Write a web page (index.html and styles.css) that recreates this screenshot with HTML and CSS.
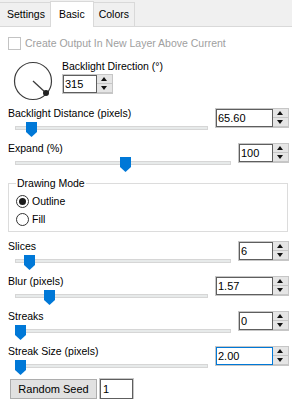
FILE: index.html
```html
<!DOCTYPE html>
<html lang="en">
<head>
 <meta charset="UTF-8">
 <title>Backlight</title>
 <link rel="stylesheet" href="styles.css">
</head>
<body>
 <div class="tabs">
 <div class="tab">Settings</div>
 <div class="tab active">Basic</div>
 <div class="tab">Colors</div>
 </div>

 <div class="panel">
 <div class="check-row disabled">
 <span class="checkbox"></span>
 <span>Create Output In New Layer Above Current</span>
 </div>

 <div class="dial-row">
 <svg class="dial" width="40" height="40" viewBox="0 0 40 40">
 <circle cx="20" cy="20" r="18.5" fill="none" stroke="#3c3c3c" stroke-width="1.2"/>
 <line x1="20" y1="20" x2="33" y2="32" stroke="#3c3c3c" stroke-width="1.3"/>
 <circle cx="33" cy="32" r="3" fill="#222"/>
 </svg>
 <div class="dial-col">
 <div class="label">Backlight Direction (°)</div>
 <div class="spin narrow">
 <span class="spin-val">315</span>
 <span class="spin-btns"><span class="up"></span><span class="down"></span></span>
 </div>
 </div>
 </div>

 <div class="srow">
 <div class="scol">
 <div class="label">Backlight Distance (pixels)</div>
 <div class="slider"><div class="track"></div><span class="thumb" style="left: 11px"></span></div>
 </div>
 <div class="spin wide">
 <span class="spin-val">65.60</span>
 <span class="spin-btns"><span class="up"></span><span class="down"></span></span>
 </div>
 </div>

 <div class="srow">
 <div class="scol">
 <div class="label">Expand (%)</div>
 <div class="slider"><div class="track"></div><span class="thumb" style="left: 105px"></span></div>
 </div>
 <div class="spin narrow">
 <span class="spin-val">100</span>
 <span class="spin-btns"><span class="up"></span><span class="down"></span></span>
 </div>
 </div>

 <fieldset class="group">
 <legend>Drawing Mode</legend>
 <div class="radio-row"><span class="radio checked"></span>Outline</div>
 <div class="radio-row"><span class="radio"></span>Fill</div>
 </fieldset>

 <div class="srow">
 <div class="scol">
 <div class="label">Slices</div>
 <div class="slider"><div class="track"></div><span class="thumb" style="left: 9px"></span></div>
 </div>
 <div class="spin narrow">
 <span class="spin-val">6</span>
 <span class="spin-btns"><span class="up"></span><span class="down"></span></span>
 </div>
 </div>

 <div class="srow">
 <div class="scol">
 <div class="label">Blur (pixels)</div>
 <div class="slider"><div class="track"></div><span class="thumb" style="left: 29px"></span></div>
 </div>
 <div class="spin wide">
 <span class="spin-val">1.57</span>
 <span class="spin-btns"><span class="up"></span><span class="down"></span></span>
 </div>
 </div>

 <div class="srow">
 <div class="scol">
 <div class="label">Streaks</div>
 <div class="slider"><div class="track"></div><span class="thumb" style="left: 0px"></span></div>
 </div>
 <div class="spin narrow">
 <span class="spin-val">0</span>
 <span class="spin-btns"><span class="up"></span><span class="down"></span></span>
 </div>
 </div>

 <div class="srow">
 <div class="scol">
 <div class="label">Streak Size (pixels)</div>
 <div class="slider"><div class="track"></div><span class="thumb" style="left: 0px"></span></div>
 </div>
 <div class="spin wide focus">
 <span class="spin-val">2.00</span>
 <span class="spin-btns"><span class="up"></span><span class="down"></span></span>
 </div>
 </div>

 <div class="seed-row">
 <div class="btn">Random Seed</div>
 <div class="seed-box">1</div>
 </div>
 </div>
</body>
</html>
```

FILE: styles.css
```css
* {
margin: 0;
padding: 0;
box-sizing: border-box;
}

body {
font-family: 'Liberation Sans', Arial, sans-serif;
font-size: 10.5px;
color: #000;
background: #fff;
width: 292px;
}

/* tab strip */
.tabs {
display: flex;
align-items: flex-end;
height: 27px;
background: #f0f0f0;
border-bottom: 1px solid #d9d9d9;
}

.tab {
height: 24px;
line-height: 22px;
padding: 0 5px;
background: #f0f0f0;
border: 1px solid #d9d9d9;
border-bottom: none;
margin-right: -1px;
}

.tab:first-child {
padding-left: 7px;
border-left: none;
}

.tab.active {
height: 26px;
line-height: 24px;
padding: 0 8px;
background: #fff;
margin-bottom: -1px;
position: relative;
z-index: 1;
}

.panel {
padding: 0 3px 0 8px;
}

.label {
height: 14px;
line-height: 14px;
white-space: nowrap;
}

/* checkbox */
.check-row {
display: flex;
align-items: center;
gap: 4px;
height: 13px;
margin-top: 10px;
line-height: 13px;
}

.check-row.disabled {
color: #a0a0a0;
}

.checkbox {
width: 13px;
height: 13px;
border: 1px solid #c3c3c3;
background: #fff;
}

/* direction dial */
.dial-row {
display: flex;
height: 46px;
margin-top: 10px;
}

.dial {
margin: 1px 0 0 5px;
}

.dial-col {
display: flex;
flex-direction: column;
align-items: flex-start;
margin-left: 9px;
}

.dial-col .label {
height: 13px;
line-height: 12px;
}

.dial-col .spin {
margin-top: 1px;
}

/* slider rows */
.srow {
display: flex;
align-items: flex-start;
height: 35px;
}

.scol {
flex: 1;
min-width: 0;
}

.slider {
position: relative;
height: 21px;
margin: 0 7px 0 7px;
}

.track {
position: absolute;
left: 0;
right: 0;
top: 6px;
height: 4px;
background: #e7eaea;
border: 1px solid #d6d6d6;
}

.thumb {
position: absolute;
top: 2px;
width: 11px;
height: 15px;
background: #0078d7;
clip-path: polygon(0 0, 100% 0, 100% 66%, 50% 100%, 0 66%);
}

/* numeric up-down */
.spin {
display: flex;
height: 20px;
margin-top: 2px;
border: 1px solid #c6c6c6;
border-right: none;
}

.spin.narrow .spin-val {
width: 34px;
}

.spin.wide .spin-val {
width: 57px;
}

.spin-val {
height: 100%;
border: 1px solid #5e5e5e;
background: #fff;
font-size: 11px;
line-height: 16px;
padding-left: 1px;
}

.spin.focus .spin-val {
border-color: #0078d7;
}

.spin-btns {
display: flex;
flex-direction: column;
width: 16px;
}

.spin-btns span {
flex: 1;
position: relative;
background: #e5e5e5;
border: 1px solid #c6c6c6;
border-left: none;
border-top: none;
}

.spin-btns span::after {
content: "";
position: absolute;
left: 4px;
top: 2px;
border-left: 3.5px solid transparent;
border-right: 3.5px solid transparent;
}

.spin-btns .up::after {
border-bottom: 4px solid #111;
}

.spin-btns .down::after {
border-top: 4px solid #111;
}

/* group box */
.group {
margin: 1px 1px 0 0;
padding: 0 7px 5px 7px;
border: 1px solid #dcdcdc;
}

.group legend {
padding: 0 1px;
line-height: 13px;
}

.radio-row {
display: flex;
align-items: center;
gap: 3px;
height: 13px;
line-height: 13px;
margin-top: 5px;
}

.radio {
width: 13px;
height: 13px;
border: 1px solid #333;
border-radius: 50%;
background: #fff;
position: relative;
}

.radio.checked::after {
content: "";
position: absolute;
left: 2px;
top: 2px;
width: 7px;
height: 7px;
border-radius: 50%;
background: #1a1a1a;
}

.group + .srow {
margin-top: 7px;
}

/* seed */
.seed-row {
display: flex;
gap: 3px;
margin-left: 2px;
}

.btn {
width: 87px;
height: 20px;
line-height: 18px;
text-align: center;
font-size: 11px;
background: #e1e1e1;
border: 1px solid #adadad;
}

.seed-box {
width: 33px;
height: 20px;
border: 1px solid #5e5e5e;
box-shadow: 0 0 0 1px #c6c6c6;
font-size: 11px;
line-height: 18px;
padding-left: 2px;
}
```
